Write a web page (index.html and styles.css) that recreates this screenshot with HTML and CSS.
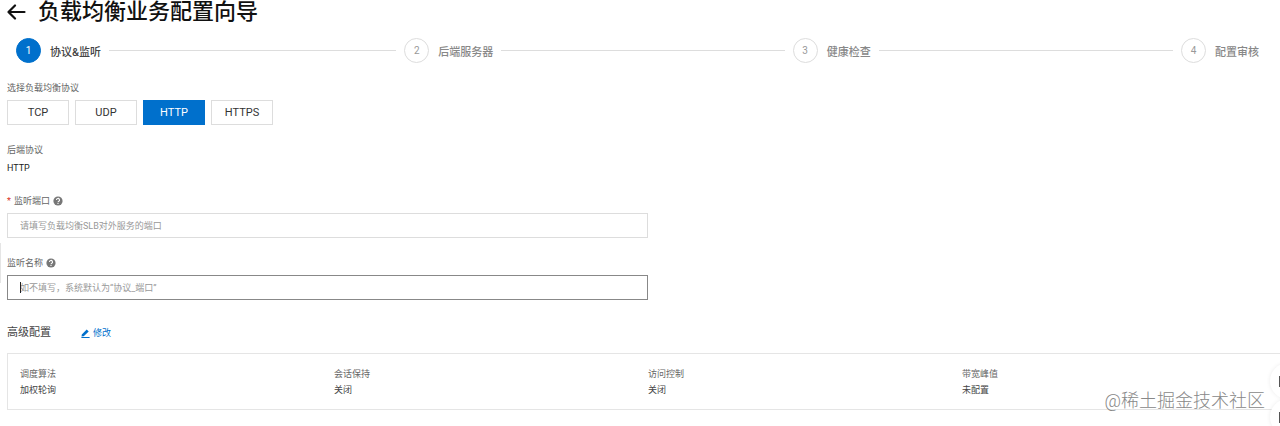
FILE: index.html
```html
<!DOCTYPE html>
<html lang="zh-CN">
<head>
<meta charset="utf-8">
<meta name="viewport" content="width=device-width, initial-scale=1">
<title>负载均衡业务配置向导</title>
<link rel="stylesheet" href="styles.css">
</head>
<body>
<header class="page-header">
  <button class="back" type="button" aria-label="返回">
    <svg width="19" height="16" viewBox="0 0 19 16" fill="none" stroke="currentColor" stroke-width="2.200" stroke-linecap="round" stroke-linejoin="round"><path d="M17.500 8H1.500M8 1.500 1.500 8 8 14.500"/></svg>
  </button>
  <h1 class="title">负载均衡业务配置向导</h1>
</header>

<ol class="steps">
  <li class="step step-active"><span class="step-num">1</span><span class="step-label">协议&amp;监听</span></li>
  <li class="step"><span class="step-num">2</span><span class="step-label">后端服务器</span></li>
  <li class="step"><span class="step-num">3</span><span class="step-label">健康检查</span></li>
  <li class="step"><span class="step-num">4</span><span class="step-label">配置审核</span></li>
</ol>

<main class="form">
  <section class="field">
    <div class="label" id="protocol-label">选择负载均衡协议</div>
    <div class="protocols" role="group" aria-labelledby="protocol-label">
      <button class="protocol" type="button">TCP</button>
      <button class="protocol" type="button">UDP</button>
      <button class="protocol protocol-on" type="button" aria-pressed="true">HTTP</button>
      <button class="protocol" type="button">HTTPS</button>
    </div>
  </section>

  <section class="field field-static">
    <div class="label">后端协议</div>
    <div class="value">HTTP</div>
  </section>

  <section class="field">
    <div class="label">
      <span class="required">*</span>
      <label for="port">监听端口</label>
      <svg class="help" width="10" height="10" viewBox="0 0 10 10"><circle cx="5" cy="5" r="4.6" fill="#777"/><path d="M3.500 4a1.500 1.500 0 1 1 2.300 1.200Q5 5.600 5 6.200M5 7v1" fill="none" stroke="#fff" stroke-width="1.100"/></svg>
    </div>
    <input class="input" id="port" type="text" placeholder="请填写负载均衡SLB对外服务的端口">
  </section>

  <section class="field">
    <div class="label">
      <label for="name">监听名称</label>
      <svg class="help" width="10" height="10" viewBox="0 0 10 10"><circle cx="5" cy="5" r="4.6" fill="#777"/><path d="M3.500 4a1.500 1.500 0 1 1 2.300 1.200Q5 5.600 5 6.200M5 7v1" fill="none" stroke="#fff" stroke-width="1.100"/></svg>
    </div>
    <div class="input-current">
      <input class="input" id="name" type="text" placeholder="如不填写，系统默认为“协议_端口”">
    </div>
  </section>

  <section class="advanced">
    <div class="advanced-head">
      <h2 class="advanced-title">高级配置</h2>
      <a class="edit" href="#">
        <svg width="9" height="9" viewBox="0 0 9 9"><path d="M.8 5.500 5.700.5l2 1.900-5 4.800-2.200.4zM.4 7.900h8.200v1H.4z" fill="currentColor"/></svg>
        修改
      </a>
    </div>
    <dl class="summary">
      <div><dt>调度算法</dt><dd>加权轮询</dd></div>
      <div><dt>会话保持</dt><dd>关闭</dd></div>
      <div><dt>访问控制</dt><dd>关闭</dd></div>
      <div><dt>带宽峰值</dt><dd>未配置</dd></div>
    </dl>
  </section>
</main>

<div class="drawer-handle"></div>
<div class="float-tools">
  <button class="float-tool" type="button" aria-label="咨询"></button>
  <button class="float-tool" type="button" aria-label="反馈"></button>
</div>
<div class="watermark">@稀土掘金技术社区</div>
</body>
</html>
```
FILE: styles.css
```css
* {
  box-sizing: border-box;
}

html {
  overflow: hidden;
}

body {
  position: relative;
  margin: 0;
  min-height: 100vh;
  overflow: hidden;
  background: #fff;
  color: #444;
  font: 9px/16px Roboto, "Noto Sans CJK SC", sans-serif;
}

button,
input {
  font: inherit;
  border-radius: 0;
}

.page-header {
  display: flex;
  align-items: center;
  gap: 12px;
  height: 24px;
  padding-left: 7px;
}

.back {
  display: flex;
  padding: 0;
  border: 0;
  background: none;
  color: #111;
}

.title {
  margin: 0;
  color: #111;
  font-size: 22px;
  line-height: 24px;
  font-weight: 500;
}

.steps {
  display: flex;
  margin: 14px 0 0;
  padding: 0 21px 0 16px;
  list-style: none;
}

.step {
  display: flex;
  flex: 1;
  align-items: center;
  color: #888;
  font-size: 11px;
}

.step:last-child {
  flex: none;
}

.step:not(:last-child)::after {
  content: "";
  flex: 1;
  height: 1px;
  margin: 0 8px;
  background: #ddd;
}

.step-num {
  width: 25px;
  height: 25px;
  margin-right: 9px;
  border: 1px solid #ddd;
  border-radius: 50%;
  color: #999;
  font-size: 10px;
  line-height: 24px;
  text-align: center;
}

.step-label {
  padding-top: 4px;
  font-weight: 500;
}

.step-active {
  color: #444;
}

.step-active .step-num {
  border-color: #0070cc;
  background: #0070cc;
  color: #fff;
}

.form {
  padding: 17px 0 16px 7px;
}

.field {
  margin-bottom: 17px;
}

.label {
  display: flex;
  align-items: center;
  gap: 3px;
  margin-bottom: 4px;
  color: #666;
}

.required {
  color: #d93026;
}

.protocols {
  display: flex;
  gap: 6px;
}

.protocol {
  width: 62px;
  height: 25px;
  padding: 1px 0 0;
  border: 1px solid #ddd;
  background: #fff;
  color: #333;
  font-size: 11px;
}

.protocol-on {
  border-color: #0070cc;
  background: #0070cc;
  color: #fff;
}

.field-static .label {
  margin-bottom: 2px;
}

.value {
  color: #222;
}

.input {
  display: block;
  width: 641px;
  max-width: 100%;
  height: 25px;
  padding: 0 12px;
  border: 1px solid #ddd;
  outline: 0;
  background: #fff;
  color: #333;
}

.input::placeholder {
  color: #999;
  opacity: 1;
}

.input-current {
  position: relative;
}

.input-current .input {
  border-color: #888;
}

.input-current::after {
  content: "";
  position: absolute;
  top: 7px;
  left: 13px;
  width: 1px;
  height: 11px;
  background: #222;
}

.advanced {
  padding-top: 8px;
}

.advanced-head {
  display: flex;
  align-items: center;
  gap: 30px;
  margin-bottom: 12px;
}

.advanced-title {
  margin: 0;
  font-size: 11px;
  line-height: 16px;
  font-weight: 400;
}

.edit {
  display: flex;
  align-items: center;
  gap: 3px;
  color: #0070cc;
  text-decoration: none;
}

.summary {
  display: grid;
  grid-template-columns: repeat(4, 1fr);
  margin: 0;
  padding: 12px 4px 11px 12px;
  border: 1px solid #e5e5e5;
  border-right: 0;
}

.summary dt {
  color: #666;
}

.summary dd {
  margin: 0;
}

.drawer-handle {
  position: absolute;
  top: 243px;
  left: 0;
  width: 1px;
  height: 40px;
  background: #e5e5e5;
}

.float-tools {
  position: absolute;
  top: 363px;
  right: -26px;
}

.float-tool {
  display: flex;
  align-items: center;
  width: 36px;
  height: 36px;
  padding: 0 0 0 9px;
  border: 0;
  border-radius: 50%;
  background: #fff;
  box-shadow: 0 0 4px rgba(0, 0, 0, 0.08);
}

.float-tool::before {
  content: "";
  width: 16px;
  height: 9px;
  border: 1px solid #555;
}

.watermark {
  position: absolute;
  top: 389px;
  right: 15px;
  color: #888;
  font-size: 18px;
  line-height: 24px;
  font-weight: 300;
  text-shadow: 0 0 1px #fff;
}
```
